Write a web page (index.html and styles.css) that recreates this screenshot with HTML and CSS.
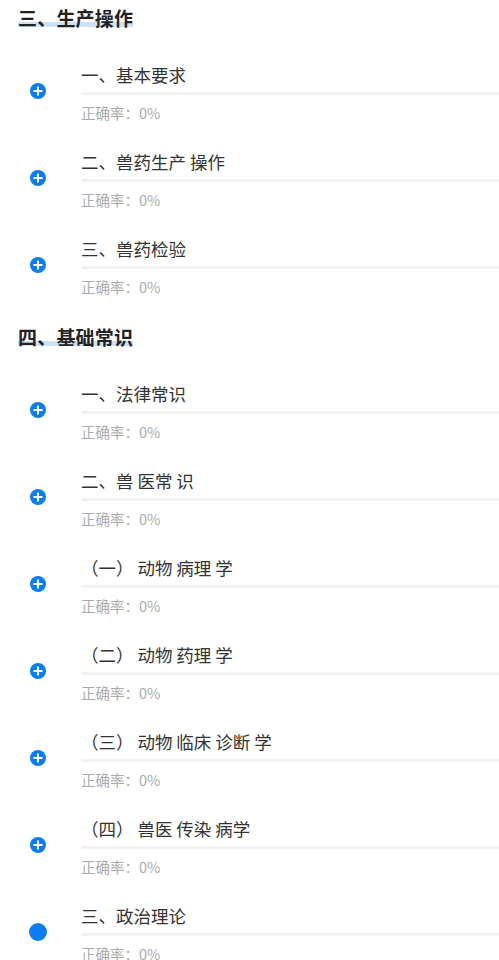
FILE: index.html
```html
<!DOCTYPE html>
<html lang="zh-CN">

<head>
    <meta charset="UTF-8" />
    <meta name="viewport" content="width=device-width, initial-scale=1.0" />
    <title>练习目录</title>
    <link rel="stylesheet" href="styles.css">
</head>

<body>
    <div class="section">
        <div class="section-title"><span>三、生产操作</span></div>

        <div class="item">
            <svg class="icon" viewBox="0 0 16 16"><circle cx="8" cy="8" r="8" /><path d="M8 4.2v7.6M4.2 8h7.6" /></svg>
            <div class="item-body">
                <div class="item-name">一、基本要求</div>
                <div class="bar"></div>
                <div class="rate">正确率：0%</div>
            </div>
        </div>

        <div class="item">
            <svg class="icon" viewBox="0 0 16 16"><circle cx="8" cy="8" r="8" /><path d="M8 4.2v7.6M4.2 8h7.6" /></svg>
            <div class="item-body">
                <div class="item-name">二、兽药生产 操作</div>
                <div class="bar"></div>
                <div class="rate">正确率：0%</div>
            </div>
        </div>

        <div class="item">
            <svg class="icon" viewBox="0 0 16 16"><circle cx="8" cy="8" r="8" /><path d="M8 4.2v7.6M4.2 8h7.6" /></svg>
            <div class="item-body">
                <div class="item-name">三、兽药检验</div>
                <div class="bar"></div>
                <div class="rate">正确率：0%</div>
            </div>
        </div>
    </div>

    <div class="section">
        <div class="section-title"><span>四、基础常识</span></div>

        <div class="item">
            <svg class="icon" viewBox="0 0 16 16"><circle cx="8" cy="8" r="8" /><path d="M8 4.2v7.6M4.2 8h7.6" /></svg>
            <div class="item-body">
                <div class="item-name">一、法律常识</div>
                <div class="bar"></div>
                <div class="rate">正确率：0%</div>
            </div>
        </div>

        <div class="item">
            <svg class="icon" viewBox="0 0 16 16"><circle cx="8" cy="8" r="8" /><path d="M8 4.2v7.6M4.2 8h7.6" /></svg>
            <div class="item-body">
                <div class="item-name">二、兽 医常 识</div>
                <div class="bar"></div>
                <div class="rate">正确率：0%</div>
            </div>
        </div>

        <div class="item">
            <svg class="icon" viewBox="0 0 16 16"><circle cx="8" cy="8" r="8" /><path d="M8 4.2v7.6M4.2 8h7.6" /></svg>
            <div class="item-body">
                <div class="item-name">（一） 动物 病理 学</div>
                <div class="bar"></div>
                <div class="rate">正确率：0%</div>
            </div>
        </div>

        <div class="item">
            <svg class="icon" viewBox="0 0 16 16"><circle cx="8" cy="8" r="8" /><path d="M8 4.2v7.6M4.2 8h7.6" /></svg>
            <div class="item-body">
                <div class="item-name">（二） 动物 药理 学</div>
                <div class="bar"></div>
                <div class="rate">正确率：0%</div>
            </div>
        </div>

        <div class="item">
            <svg class="icon" viewBox="0 0 16 16"><circle cx="8" cy="8" r="8" /><path d="M8 4.2v7.6M4.2 8h7.6" /></svg>
            <div class="item-body">
                <div class="item-name">（三） 动物 临床 诊断 学</div>
                <div class="bar"></div>
                <div class="rate">正确率：0%</div>
            </div>
        </div>

        <div class="item">
            <svg class="icon" viewBox="0 0 16 16"><circle cx="8" cy="8" r="8" /><path d="M8 4.2v7.6M4.2 8h7.6" /></svg>
            <div class="item-body">
                <div class="item-name">（四） 兽医 传染 病学</div>
                <div class="bar"></div>
                <div class="rate">正确率：0%</div>
            </div>
        </div>

        <div class="item">
            <svg class="icon icon-dot" viewBox="0 0 18 18"><circle cx="9" cy="9" r="9" /></svg>
            <div class="item-body">
                <div class="item-name">三、政治理论</div>
                <div class="bar"></div>
                <div class="rate">正确率：0%</div>
            </div>
        </div>
    </div>
</body>

</html>
```

FILE: styles.css
```css
body {
    margin: 0;
    padding-top: 5px;
    background-color: #fff;
    font-family: "Noto Sans CJK SC", "Noto Sans", sans-serif;
    color: #333;
    overflow: hidden;
}

.section-title {
    height: 26px;
    margin: 0 0 32px 18px;
    font-size: 19px;
    font-weight: bold;
    line-height: 26px;
    color: #222;
}

.section-title span {
    display: inline-block;
    letter-spacing: 0.2px;
    background-image: linear-gradient(transparent 65%, #cfe1f7 65%, #cfe1f7 84%, transparent 84%);
}

.item {
    display: flex;
    height: 87px;
    padding-left: 30px;
}

.icon {
    flex: none;
    width: 16px;
    height: 16px;
    margin-top: 20px;
    margin-right: 35px;
}

.icon circle {
    fill: #0c7cf3;
}

.icon path {
    stroke: #fff;
    stroke-width: 2;
    stroke-linecap: round;
}

.icon-dot {
    width: 18px;
    height: 18px;
    margin-top: 19px;
    margin-left: -1px;
    margin-right: 34px;
}

.item-body {
    flex: 1;
    min-width: 0;
}

.item-name {
    font-size: 17.5px;
    line-height: 24px;
    color: #333;
    white-space: nowrap;
}

.bar {
    height: 3px;
    margin-top: 5px;
    border-radius: 2px 0 0 2px;
    background-color: #f2f2f2;
}

.rate {
    margin-top: 8px;
    font-size: 14.5px;
    line-height: 20px;
    color: #aaa;
}
```
